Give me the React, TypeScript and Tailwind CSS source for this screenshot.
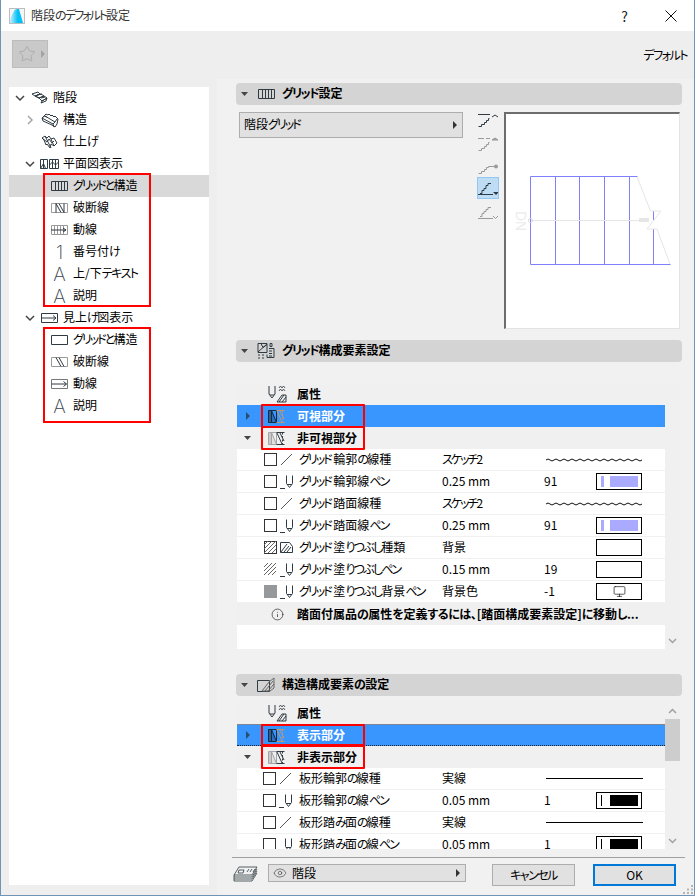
import { ReactNode } from "react"
import { Eye, Info, Monitor, Star } from "lucide-react"

const dark = "#2f3b42"
const grey = "#9a9a9a"

// Meiryo UI squeezes its kana, so kana runs get tighter tracking than kanji
function Jp({ text, bold, loose }: { text: string; bold?: boolean; loose?: boolean }) {
  const parts = text.split(/([\u30A0-\u30FF]+|[\u3040-\u309F]+)/).filter(Boolean)
  return (
    <>
      {parts.map((p, i) => {
        const kata = /[\u30A0-\u30FF]/.test(p)
        const hira = /[\u3040-\u309F]/.test(p)
        if (kata) return <span key={i} className={bold ? "tracking-[-1.5px]" : loose ? "tracking-[-1.5px]" : "tracking-[-2px]"}>{p}</span>
        if (hira) return <span key={i} className={bold ? "tracking-[-0.5px]" : "tracking-[-1.75px]"}>{p}</span>
        return <span key={i}>{p}</span>
      })}
    </>
  )
}

function Ico({ w, h, children, className }: { w: number; h: number; children: ReactNode; className?: string }) {
  return (
    <svg width={w} height={h} viewBox={`0 0 ${w} ${h}`} fill="none" stroke={dark} strokeWidth={1} className={`shrink-0 ${className ?? ""}`}>
      {children}
    </svg>
  )
}

function Tri({ dir, color = "#444" }: { dir: "down" | "right"; color?: string }) {
  return (
    <svg width="8" height="8" viewBox="0 0 8 8" className="shrink-0">
      <path d={dir === "down" ? "M0 2h7L3.500 6z" : "M2 0v8l4-4z"} fill={color} />
    </svg>
  )
}

function Chevron({ open, light }: { open?: boolean; light?: boolean }) {
  return (
    <svg width="10" height="10" viewBox="0 0 10 10" fill="none" stroke={light ? "#a6a6a6" : "#444"} strokeWidth="1.500" className="shrink-0">
      <path d={open ? "M1 3l4 4 4-4" : "M3 1l4 4-4 4"} />
    </svg>
  )
}

const StairIcon = () => (
  <Ico w={17} h={14}>
    <path d="M1 3l6-2 2 2-5 2zM4 5l6-2 3 2-5 2zM4 5l4 2M8 7l5-2 3 2-5 3zM8 7l3 3 5-3M11 10l-1 2 5-2 1-3M6 4l5-1M10 7l4-1" />
  </Ico>
)
const StructIcon = () => (
  <Ico w={18} h={16}>
    <path d="M1 6l4-4 2 1 1-1 2 2 1-1 2 2 1-1 3 3-1 5-2 3-3-2-9-4zM1 6l11 6 1 3M1 6q2-3 5-1M4 4l10 6 2-3M12 12l2-2" />
  </Ico>
)
const FinishIcon = () => (
  <Ico w={17} h={16}>
    <path d="M1 4l3-2 2 2 2-2 2 3 3-1 3 5-3 3-3-2-1 4-3-4-1 1-2-5zM4 2l3 6 3 6M10 5l3 7M1 4l5 4 2-3 3 4 2-2" />
  </Ico>
)
const PlanIcon = () => (
  <Ico w={19} h={12}>
    <path d="M.5 10.500v-9h7v9zM3.500 1.500v9M.5 10.500l3-5 2 5M9.500 10.500v-9h9v9zM12.500 1.500v9M15.500 1.500v9M9.500 7l3-3 3 3 3-3" />
  </Ico>
)
const GridIcon = () => (
  <Ico w={17} h={12}>
    <path d="M.5 1.500h16v9H.5zM4.500 1.500v9M7.500 1.500v9M10.500 1.500v9M13.500 1.500v9" />
  </Ico>
)
const BreakIcon = ({ tight }: { tight?: boolean }) => (
  <Ico w={17} h={12}>
    <path d="M.5 1.500h16v9H.5z" stroke="#9a9a9a" />
    <path d="M5 1.500l5 9M8 1.500l5 9" />
    {!tight && <path d="M5 1.500v9M13 1.500v9" />}
  </Ico>
)
const WalkIcon = () => (
  <Ico w={17} h={12}>
    <path d="M.5 1.500h16v9H.5z" stroke="#9a9a9a" />
    <path d="M3.500 1.500v9M6.500 1.500v9M9.500 1.500v9M12.500 1.500v9" stroke="#9a9a9a" />
    <path d="M0 6h15M12 4l3 2-3 2" />
  </Ico>
)
const RectIcon = () => (
  <Ico w={17} h={12}>
    <path d="M.5 1.500h16v9H.5z" />
  </Ico>
)
const WalkSimple = () => (
  <Ico w={17} h={12}>
    <path d="M.5 1.500h16v9H.5z" stroke="#777" />
    <path d="M.5 6h15M12.500 3.500L15.500 6l-3 2.500" />
  </Ico>
)
const FlatIcon = () => (
  <Ico w={17} h={12}>
    <path d="M.5 1.500h16v9H.5z" />
    <path d="M0 6h15M12 3.500L15 6l-3 2.500" />
  </Ico>
)
const LetterIcon = ({ ch }: { ch: string }) => (
  <span className="w-[17px] text-center font-['Inter','Liberation_Sans',sans-serif] font-extralight text-[19px] leading-none text-[#37434a] shrink-0">{ch}</span>
)

function TreeRow({ depth, chevron, icon, label, selected, loose }: { depth: 0 | 1 | 2; chevron?: "open" | "closed"; icon: ReactNode; label: string; selected?: boolean; loose?: boolean }) {
  const pad = depth === 0 ? "pl-[6px]" : depth === 1 ? "pl-[16px]" : "pl-[26px]"
  return (
    <div className={`h-[22px] flex items-center ${pad} ${selected ? "bg-[#d9d9d9]" : ""}`}>
      <span className="w-[10px] shrink-0">{chevron && <Chevron open={chevron === "open"} light={chevron === "closed"} />}</span>
      <span className="w-[17px] ml-[6px] flex justify-center shrink-0">{icon}</span>
      <span className="ml-[5px] mb-[2px] whitespace-nowrap"><Jp text={label} loose={loose} /></span>
    </div>
  )
}

function RedGroup({ bottom, children }: { bottom: string; children: ReactNode }) {
  return (
    <div className="relative">
      {children}
      <div className={`absolute left-[34px] w-[108px] top-[-2px] border-2 border-[#f00] pointer-events-none ${bottom}`} />
    </div>
  )
}

function Tree() {
  return (
    <div className="w-[200px] bg-white h-[798px] shrink-0">
      <TreeRow depth={0} chevron="open" icon={<StairIcon />} label="階段" />
      <TreeRow depth={1} chevron="closed" icon={<StructIcon />} label="構造" />
      <TreeRow depth={1} icon={<FinishIcon />} label="仕上げ" />
      <TreeRow depth={1} chevron="open" icon={<PlanIcon />} label="平面図表示" />
      <RedGroup bottom="bottom-0">
        <TreeRow depth={2} icon={<GridIcon />} label="グリッドと構造" selected />
        <TreeRow depth={2} icon={<BreakIcon />} label="破断線" />
        <TreeRow depth={2} icon={<WalkIcon />} label="動線" />
        <TreeRow depth={2} icon={<LetterIcon ch="1" />} label="番号付け" />
        <TreeRow depth={2} icon={<LetterIcon ch="A" />} label="上/下テキスト" loose />
        <TreeRow depth={2} icon={<LetterIcon ch="A" />} label="説明" />
      </RedGroup>
      <TreeRow depth={1} chevron="open" icon={<FlatIcon />} label="見上げ図表示" />
      <RedGroup bottom="bottom-[-6px]">
        <TreeRow depth={2} icon={<RectIcon />} label="グリッドと構造" />
        <TreeRow depth={2} icon={<BreakIcon tight />} label="破断線" />
        <TreeRow depth={2} icon={<WalkSimple />} label="動線" />
        <TreeRow depth={2} icon={<LetterIcon ch="A" />} label="説明" />
      </RedGroup>
    </div>
  )
}

function SectionHeader({ icon, title }: { icon: ReactNode; title: string }) {
  return (
    <div className="h-[22px] bg-[#d4d4d4] rounded-[4px] flex items-center pl-[5px] font-bold">
      <Tri dir="down" />
      <span className="ml-[8px] w-[18px] flex justify-center shrink-0">{icon}</span>
      <span className="ml-[7px] mb-[2px]"><Jp text={title} bold /></span>
    </div>
  )
}

const stairPath = "M0.500 13.500h3v-2h3v-2h2v-2h2v-2h1"

function StairButtons() {
  return (
    <div className="w-[22px] ml-[14px] flex flex-col -mt-[2px] shrink-0">
      <div className="h-[20px] flex items-center justify-center">
        <Ico w={20} h={15}>
          <path d="M0 1.500h12M14 4l3-2 3 2" />
          <path d={stairPath} />
        </Ico>
      </div>
      <div className="h-[20px] mt-[4px] flex items-center justify-center">
        <Ico w={20} h={15}>
          <path d="M0 1.500h6M8 1.500h4" stroke={grey} />
          <path d="M14 3l3-2 3 2z" fill={grey} stroke={grey} />
          <path d={stairPath} stroke={grey} />
        </Ico>
      </div>
      <div className="h-[20px] mt-[3px] flex items-center justify-center">
        <Ico w={20} h={15}>
          <path d="M0.500 13.500h3v-2h3v-2h2v-2h2v-1h6" stroke={grey} />
          <circle cx="18" cy="6.500" r="2" fill={grey} stroke="none" />
        </Ico>
      </div>
      <div className="h-[22px] flex items-center justify-center bg-[#bfdcf5] border border-[#93c8f5]">
        <Ico w={20} h={15}>
          <path d="M0 13.500h15M2 12.500h2v-3h2v-2h2v-3h2v-2h3" />
          <path d="M15 11h6l-3 3z" fill={dark} stroke="none" />
        </Ico>
      </div>
      <div className="h-[20px] mt-[3px] flex items-center justify-center">
        <Ico w={20} h={15}>
          <path d="M0 13.500h15M2 11.500h2v-3h2v-2h2v-2h2v-2h3M15 11l2.500 2.500L20 11" stroke={grey} />
        </Ico>
      </div>
    </div>
  )
}

function Preview() {
  const blue = "#8080ff"
  return (
    <div className="w-[176px] h-[217px] ml-[5px] bg-white border-t-2 border-l-2 border-t-[#6d6d6d] border-l-[#6d6d6d] border-r border-b border-r-[#e3e3e3] border-b-[#e3e3e3] shrink-0">
      <svg width="173" height="214" viewBox="507 114 173 214" fill="none">
        <path d="M531.500 176.500h107M531.500 264.500h140M531.500 176.500v88M556.500 176.500v88M580.500 176.500v88M605.500 176.500v88M630.500 176.500v88M654.500 211v9M654.500 229v35" stroke={blue} />
        <path d="M638 177l13.500 34h10.500l-14 18h10l13 35M532 220.500h118" stroke="#e6e6e6" />
        <circle cx="531.500" cy="220.500" r="2" stroke="#dcdcdc" />
        <path d="M640 218h10v4h-10z" fill="#e6e6e6" />
        <text x="0" y="0" transform="translate(517 211) rotate(90)" fill="#ebebeb" fontSize="14" fontFamily="'Liberation Sans', sans-serif">DN</text>
      </svg>
    </div>
  )
}

const Slash = () => (
  <Ico w={13} h={13}>
    <path d="M1 12L12 1" stroke="#555" />
  </Ico>
)
const Pen = () => (
  <Ico w={13} h={14}>
    <path d="M0 13.500h5M6.500 .5v8l3 4 3-4v-8M7 9.500h5" />
  </Ico>
)
const FillKind = () => (
  <Ico w={13} h={13}>
    <path d="M.5 1.500h9l3 4v6H.5zM1 11l6-8M4 11l5-6M7 11l4-5" />
  </Ico>
)

function Check({ kind }: { kind: "empty" | "hatch" | "lines" | "solid" }) {
  if (kind === "empty") return <span className="w-[13px] h-[13px] border border-[#333] bg-white shrink-0" />
  if (kind === "solid") return <span className="w-[13px] h-[13px] bg-[#96999b] shrink-0" />
  return (
    <svg width="13" height="13" viewBox="0 0 13 13" fill="none" stroke="#666" className="shrink-0">
      {kind === "hatch" && <rect x=".5" y=".5" width="12" height="12" stroke="#333" />}
      <path d="M0 4L4 0M0 8L8 0M0 12L12 0M4 12L12 4M8 12L12 8" />
    </svg>
  )
}

function Swatch({ kind }: { kind?: "blue" | "black" | "monitor" }) {
  return (
    <span className="w-[46px] h-[17px] border border-black bg-white flex items-center justify-center shrink-0">
      {kind === "blue" && (
        <>
          <span className="w-[3px] h-[11px] bg-[#aaaaff]" />
          <span className="w-[28px] h-[11px] bg-[#aaaaff] ml-[6px]" />
        </>
      )}
      {kind === "black" && (
        <>
          <span className="w-px h-[11px] bg-black mr-[2px]" />
          <span className="w-[28px] h-[11px] bg-black ml-[6px]" />
        </>
      )}
      {kind === "monitor" && <Monitor size={13} strokeWidth={1.25} color="#111" />}
    </span>
  )
}

function Wave() {
  return (
    <svg width="97" height="6" viewBox="0 0 97 6" fill="none" stroke="#111" className="shrink-0">
      <path d="M0 3q2-2 4 0t4 0 4 0 4 0 4 0 4 0 4 0 4 0 4 0 4 0 4 0 4 0 4 0 4 0 4 0 4 0 4 0 4 0 4 0 4 0 4 0 4 0 4 0 4 0" />
    </svg>
  )
}

type Attr = {
  check: "empty" | "hatch" | "lines" | "solid"
  icon: "slash" | "pen" | "fill"
  label: string
  value: string
  num?: string
  preview: "wave" | "line" | "blue" | "black" | "monitor" | "box"
}

function AttrRow({ row, pad }: { row: Attr; pad: string }) {
  return (
    <div className="h-[22px] bg-white border-b border-[#f0f0f0] flex items-center">
      <span className={`w-[62px] shrink-0 flex items-center ${pad}`}>
        <Check kind={row.check} />
        <span className="pl-[3px] flex">
          {row.icon === "slash" ? <Slash /> : row.icon === "pen" ? <Pen /> : <FillKind />}
        </span>
      </span>
      <span className="w-[143px] mb-px shrink-0 whitespace-pre"><Jp text={row.label} /></span>
      {row.preview === "wave" || row.preview === "line" ? (
        <>
          <span className="w-[104px] mb-px shrink-0"><Jp text={row.value} /></span>
          {row.preview === "wave" ? <Wave /> : <span className="w-[97px] h-px bg-black shrink-0" />}
        </>
      ) : (
        <>
          <span className="w-[102px] mb-px shrink-0"><Jp text={row.value} /></span>
          <span className="w-[52px] mb-px shrink-0">{row.num}</span>
          <Swatch kind={row.preview === "box" ? undefined : row.preview} />
        </>
      )}
    </div>
  )
}

const AttrHeadIcon = () => (
  <Ico w={19} h={18}>
    <path d="M1 1v8l3 4 3-4V1M2 10h4" />
    <path d="M11 3l1.500-2 1.500 2 1.500-2 1.500 2M11 6l1.500-2 1.500 2 1.500-2 1.500 2" strokeWidth=".8" />
    <path d="M9 17l5-7h4v7zM11 17l5-7M14 17l4-5" />
  </Ico>
)
const VisIcon = ({ on }: { on: boolean }) => {
  const left = on ? "#16283a" : "#a4a4a4"
  const right = on ? "#b49a7c" : dark
  return (
    <Ico w={18} h={13}>
      <path d="M3.500 .5v12h5z" fill={left} fillOpacity={on ? 0.35 : 0.2} stroke={left} />
      <path d="M.5 .5h8v12h-8zM2 .5v12" stroke={left} />
      <path d="M8.500 .5h8M8.500 12.500h8M9 1l5 11M12 1l4 8M14.500 .5v2M14.500 4v2M14.500 7.500v2M14.500 11v1.500" stroke={right} />
    </Ico>
  )
}

function GroupRow({ label, icon, tri, blue, dotted, red }: { label: string; icon: ReactNode; tri?: "down" | "right"; blue?: boolean; dotted?: boolean; red?: boolean }) {
  return (
    <div className={`relative h-[22px] flex items-center pl-[7px] font-bold ${blue ? "bg-[#3a96ff] text-white" : "bg-[#f0f0f0]"} ${dotted ? "border-y border-dotted border-t-[#c07a30] border-b-[#222]" : ""}`}>
      <span className="w-[8px] flex justify-center shrink-0">{tri && <Tri dir={tri} color={blue ? "#27506f" : "#444"} />}</span>
      <span className="ml-[16px] w-[19px] flex shrink-0">{icon}</span>
      <span className="ml-[10px] mb-px"><Jp text={label} bold /></span>
      {red && <div className="absolute left-[24px] w-[104px] top-[-1px] bottom-[-1px] border-2 border-[#f00] rounded-[1px] pointer-events-none" />}
    </div>
  )
}

const gridRows: Attr[] = [
  { check: "empty", icon: "slash", label: "グリッド 輪郭の線種", value: "スケッチ2", preview: "wave" },
  { check: "empty", icon: "pen", label: "グリッド 輪郭線ペン", value: "0.25 mm", num: "91", preview: "blue" },
  { check: "empty", icon: "slash", label: "グリッド 踏面線種", value: "スケッチ2", preview: "wave" },
  { check: "empty", icon: "pen", label: "グリッド 踏面線ペン", value: "0.25 mm", num: "91", preview: "blue" },
  { check: "hatch", icon: "fill", label: "グリッド 塗りつぶし種類", value: "背景", preview: "box" },
  { check: "lines", icon: "pen", label: "グリッド 塗りつぶしペン", value: "0.15 mm", num: "19", preview: "box" },
  { check: "solid", icon: "pen", label: "グリッド 塗りつぶし背景ペン", value: "背景色", num: "-1", preview: "monitor" },
]

const structRows: Attr[] = [
  { check: "empty", icon: "slash", label: "板形輪郭の線種", value: "実線", preview: "line" },
  { check: "empty", icon: "pen", label: "板形輪郭の線ペン", value: "0.05 mm", num: "1", preview: "black" },
  { check: "empty", icon: "slash", label: "板形踏み面の線種", value: "実線", preview: "line" },
  { check: "empty", icon: "pen", label: "板形踏み面の線ペン", value: "0.05 mm", num: "1", preview: "black" },
]

const MiniCaret = ({ up }: { up?: boolean }) => (
  <svg width="9" height="6" viewBox="0 0 9 6" fill="none" stroke="#a0a0a0" strokeWidth="1.500">
    <path d={up ? "M1 5l3.500-3.500L8 5" : "M1 1l3.500 3.500L8 1"} />
  </svg>
)

const ComponentsIcon = () => (
  <Ico w={18} h={18}>
    <path d="M1 1.500h9v9H1zM1 10l9-8M4 1.500l2 4 4-3M1 13h2M5 13h2M1 16h2M5 16h2" />
    <path d="M12 6.500h5v9h-7v-3M12 9h3M12 11.500h3M12 14h3M13 1.500h2v3h-2z" />
  </Ico>
)
const StructHeadIcon = () => (
  <Ico w={18} h={16}>
    <path d="M.5 3.500h12v11H.5z" />
    <path d="M5 14l7-9 5-4v10l-4 3zM8 14l8-10M11 14l6-7" stroke="#666" />
  </Ico>
)

function Scrollbar({ thumb }: { thumb?: boolean }) {
  return (
    <div className="w-[15px] flex flex-col items-center shrink-0 bg-[#f0f0f0]">
      <div className="h-[17px] flex items-center justify-center">{thumb && <MiniCaret up />}</div>
      <div className="flex-1 w-full">{thumb && <div className="h-[42px] bg-[#cdcdcd]" />}</div>
      <div className="h-[17px] flex items-center justify-center">
        <MiniCaret />
      </div>
    </div>
  )
}

function RightPane() {
  return (
    <div className="flex-1 bg-[#f1f1f1] pl-[19px] pr-[12px] pt-[4px]">
      <SectionHeader icon={<GridIcon />} title="グリッド設定" />
      <div className="h-[235px] flex pl-[3px] pt-[7px]">
        <div className="w-[224px] h-[26px] bg-[#e1e1e1] border border-[#adadad] flex items-center pl-[4px] pr-[3px] shrink-0">
          <span className="flex-1 mb-[2px]"><Jp text="階段グリッド" /></span>
          <Tri dir="right" color="#333" />
        </div>
        <StairButtons />
        <Preview />
      </div>

      <SectionHeader icon={<ComponentsIcon />} title="グリッド構成要素設定" />
      <div className="h-[266px] mt-[21px] ml-px flex">
        <div className="w-[428px] flex flex-col">
          <GroupRow label="属性" icon={<AttrHeadIcon />} />
          <GroupRow label="可視部分" icon={<VisIcon on />} tri="right" blue red />
          <GroupRow label="非可視部分" icon={<VisIcon on={false} />} tri="down" red />
          {gridRows.map((r) => (
            <AttrRow key={r.label} row={r} pad="pl-[27px]" />
          ))}
          <div className="h-[22px] bg-[#f0f0f0] flex items-center font-bold shrink-0">
            <Info size={13} strokeWidth={1.25} color="#222" className="ml-[34px] mr-[13px] shrink-0" />
            <span className="mb-px whitespace-nowrap"><Jp text="踏面付属品の属性を定義するには、[踏面構成要素設定]に移動し..." bold /></span>
          </div>
          <div className="flex-1 bg-white" />
        </div>
        <Scrollbar />
      </div>

      <div className="mt-[25px]">
        <SectionHeader icon={<StructHeadIcon />} title="構造構成要素の設定" />
      </div>
      <div className="h-[147px] mt-[6px] ml-px flex">
        <div className="w-[428px] overflow-hidden">
          <GroupRow label="属性" icon={<AttrHeadIcon />} />
          <GroupRow label="表示部分" icon={<VisIcon on />} tri="right" blue dotted red />
          <GroupRow label="非表示部分" icon={<VisIcon on={false} />} tri="down" red />
          {structRows.map((r) => (
            <AttrRow key={r.label} row={r} pad="pl-[26px]" />
          ))}
        </div>
        <Scrollbar thumb />
      </div>

      <div className="mt-[8px] -mr-[3px] -ml-[4px] border-t border-[#a0a0a0] pt-[6px] flex items-start">
        <Ico w={25} h={16} className="mt-[2px] ml-[1px]">
          <path d="M1 9l5-8h18l-5 8zM1 9v2h18l5-8M1 11v2h18l5-8M1 13v2h18l5-8M6 4h5l-1 3H5zM14 6l2-3M17 6l2-3M20 6l2-3" strokeWidth=".8" />
        </Ico>
        <div className="ml-[10px] w-[198px] h-[18px] bg-[#e1e1e1] border border-[#adadad] flex items-center pl-[4px] pr-[3px]">
          <Eye size={14} strokeWidth={1} color="#333" />
          <span className="ml-[5px] flex-1">階段</span>
          <Tri dir="right" color="#333" />
        </div>
        <button className="ml-[26px] w-[83px] h-[22px] bg-[#e1e1e1] border border-[#adadad]"><Jp text="キャンセル" loose /></button>
        <button className="ml-[18px] w-[83px] h-[22px] bg-[#e1e1e1] border-2 border-[#0078d7]">OK</button>
      </div>
    </div>
  )
}

export default function App() {
  return (
    <div className="relative w-[695px] h-[896px] flex flex-col overflow-hidden bg-[#eeeeee] border-x border-b border-[#6f94b8] text-[12px] leading-none text-black font-['Noto_Sans_CJK_JP','Noto_Sans',sans-serif] [font-feature-settings:'palt']">
      <div className="h-[31px] bg-white flex items-center pl-[8px] shrink-0">
        <svg width="16" height="16" viewBox="0 0 16 16" className="shrink-0">
          <defs>
            <linearGradient id="logo" x1="0" x2="1" y1="0" y2="0">
              <stop offset="0" stopColor="#c6f1ff" />
              <stop offset="0.6" stopColor="#05bff5" />
              <stop offset="1" stopColor="#05bff5" />
            </linearGradient>
          </defs>
          <rect x=".5" y=".5" width="15" height="15" fill="#f6f6f6" stroke="#bdbdbd" />
          <path d="M1 15V11L5 3q1-2 3-2h2l4 14z" fill="url(#logo)" />
        </svg>
        <span className="ml-[6px] text-[#333] mb-px"><Jp text="階段のデフォルト設定" /></span>
        <span className="ml-auto mr-[37px] text-[14px] text-[#222]">?</span>
        <svg width="12" height="12" viewBox="0 0 12 12" stroke="#111" className="mr-[17px] shrink-0">
          <path d="M.5 .5l11 11M11.500 .5l-11 11" />
        </svg>
      </div>

      <div className="h-[48px] flex items-start shrink-0">
        <div className="ml-[11px] mt-[9px] w-[36px] h-[28px] bg-[#c9c9c9] border border-[#bcbcbc] flex items-center pl-[5px] gap-[3px]">
          <Star size={20} strokeWidth={1} color="#a3a3a3" />
          <Tri dir="right" color="#a3a3a3" />
        </div>
        <span className="ml-auto mr-[7px] mt-[18px]"><Jp text="デフォルト" loose /></span>
      </div>

      <div className="flex-1 flex min-h-0">
        <div className="pl-[8px] pr-[8px] pt-[8px]">
          <Tree />
        </div>
        <RightPane />
      </div>

      <svg width="10" height="9" viewBox="0 0 10 9" fill="#b5b5b5" className="absolute right-[1px] bottom-[1px]">
        <path d="M8 0h2v2H8zM4 3.500h2v2H4zM8 3.500h2v2H8zM0 7h2v2H0zM4 7h2v2H4zM8 7h2v2H8z" />
      </svg>
    </div>
  )
}
